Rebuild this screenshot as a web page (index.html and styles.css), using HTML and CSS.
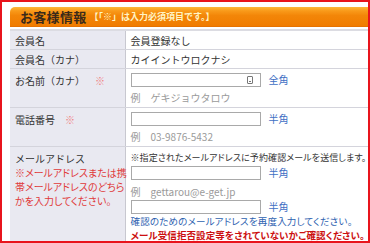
FILE: index.html
```html
<!doctype html>
<html lang="ja">
<head>
  <meta charset="UTF-8">
  <title>お客様情報</title>
  <link rel="stylesheet" href="styles.css">
</head>
<body>
  <div class="frame">
    <div class="panel">
      <h2 class="panel-head">
        <span class="panel-title">お客様情報</span>
        <span class="panel-note">【「※」は入力必須項目です。】</span>
      </h2>

      <table class="form-table">
        <colgroup>
          <col class="col-label">
          <col>
        </colgroup>
        <tr class="row-plain">
          <th>会員名</th>
          <td>会員登録なし</td>
        </tr>
        <tr class="row-plain">
          <th>会員名（カナ）</th>
          <td>カイイントウロクナシ</td>
        </tr>
        <tr>
          <th>お名前（カナ）<span class="req">※</span></th>
          <td>
            <div class="field">
              <span class="input-wrap">
                <input type="text" class="text-input">
                <span class="ime-icon"></span>
              </span>
              <span class="hint">全角</span>
            </div>
            <div class="example">例<span class="example-value">ゲキジョウタロウ</span></div>
          </td>
        </tr>
        <tr>
          <th>電話番号<span class="req">※</span></th>
          <td>
            <div class="field">
              <input type="text" class="text-input">
              <span class="hint">半角</span>
            </div>
            <div class="example">例<span class="example-value">03-9876-5432</span></div>
          </td>
        </tr>
        <tr>
          <th>
            メールアドレス
            <p class="label-note">※メールアドレスまたは携<br>帯メールアドレスのどちら<br>かを入力してください。</p>
          </th>
          <td class="mail-cell">
            <p class="mail-notice">※指定されたメールアドレスに予約確認メールを送信します。</p>
            <div class="field">
              <input type="text" class="text-input">
              <span class="hint">半角</span>
            </div>
            <div class="example">例<span class="example-value">gettarou@e-get.jp</span></div>
            <div class="field">
              <input type="text" class="text-input">
              <span class="hint">半角</span>
            </div>
            <p class="confirm">確認のためのメールアドレスを再度入力してください。</p>
            <p class="warning">メール受信拒否設定等をされていないかご確認ください。</p>
          </td>
        </tr>
      </table>
    </div>
  </div>
</body>
</html>
```

FILE: styles.css
```css
* {
  box-sizing: border-box;
}

html, body {
  margin: 0;
  height: 100%;
  overflow: hidden;
}

body {
  font-family: "Noto Sans CJK JP", "Noto Sans", sans-serif;
  font-size: 10px;
  color: #333;
  background-color: #fff;
}

.frame {
  width: 370px;
  height: 243px;
  border: 2px solid #e8141c;
  padding: 5px 0 0 8px;
  overflow: hidden;
}

.panel-head {
  margin: 0;
  height: 20px;
  padding-left: 10px;
  display: flex;
  align-items: center;
  gap: 3px;
  border-radius: 5px 0 0 0;
  background: linear-gradient(#fdb73a 0, #f99a1a 20%, #f38608 45%, #f07c00 100%);
  border-bottom: 1px solid #e67200;
}

.panel-title {
  font-size: 13px;
  font-weight: bold;
  color: #3a2a1a;
  letter-spacing: 0.3px;
}

.panel-note {
  font-size: 9px;
  font-weight: bold;
  color: #fff4c4;
}

.form-table {
  width: 100%;
  margin-top: 2px;
  table-layout: fixed;
  border-collapse: collapse;
  border-top: 2px solid #dcdce2;
}

.col-label {
  width: 115px;
}

.form-table th,
.form-table td {
  border-bottom: 1px solid #d4d4dc;
  vertical-align: top;
  line-height: 14px;
  text-align: left;
}

.form-table th {
  padding: 5px 4px 0 5px;
  font-weight: normal;
  background-color: #e9e9f1;
  border-right: 1px solid #c8c8d0;
}

.form-table td {
  padding: 4px 4px 2px 5px;
}

.row-plain th,
.row-plain td {
  padding-top: 3px;
  padding-bottom: 1px;
  height: 19px;
}

.req {
  margin-left: 10px;
  color: #f08080;
}

.field {
  display: flex;
  align-items: center;
  gap: 8px;
  height: 14px;
}

.input-wrap {
  position: relative;
  display: flex;
}

.text-input {
  width: 130px;
  height: 14px;
  margin: 0;
  padding: 0 2px;
  border: 1px solid #a9a9a9;
  background-color: #fff;
}

.ime-icon {
  position: absolute;
  top: 3px;
  right: 8px;
  width: 6px;
  height: 8px;
  border: 1px solid #777;
  border-radius: 1px;
}

.ime-icon::after {
  content: "";
  position: absolute;
  left: 1px;
  top: 2px;
  width: 2px;
  height: 2px;
  border-bottom: 1px solid #777;
}

.hint {
  color: #3f6fc4;
}

.example {
  margin-top: 4px;
  color: #9a9a9a;
}

.example-value {
  margin-left: 10px;
}

.label-note {
  margin: 0;
  color: #e03a3a;
  font-feature-settings: "palt";
  white-space: nowrap;
}

.mail-cell {
  padding-top: 0;
  padding-left: 4px;
}

.mail-notice,
.confirm,
.warning {
  margin: 0;
  white-space: nowrap;
  font-feature-settings: "palt";
}

.mail-notice {
  margin-bottom: 1px;
  font-size: 9px;
  letter-spacing: 0.1px;
}

.mail-cell .example {
  margin: 5px 0 1px;
}

.confirm {
  font-size: 9.5px;
  letter-spacing: 0.2px;
  color: #2e62b0;
}

.warning {
  font-size: 9.5px;
  letter-spacing: 0.1px;
  font-weight: bold;
  color: #cc1010;
}
```
